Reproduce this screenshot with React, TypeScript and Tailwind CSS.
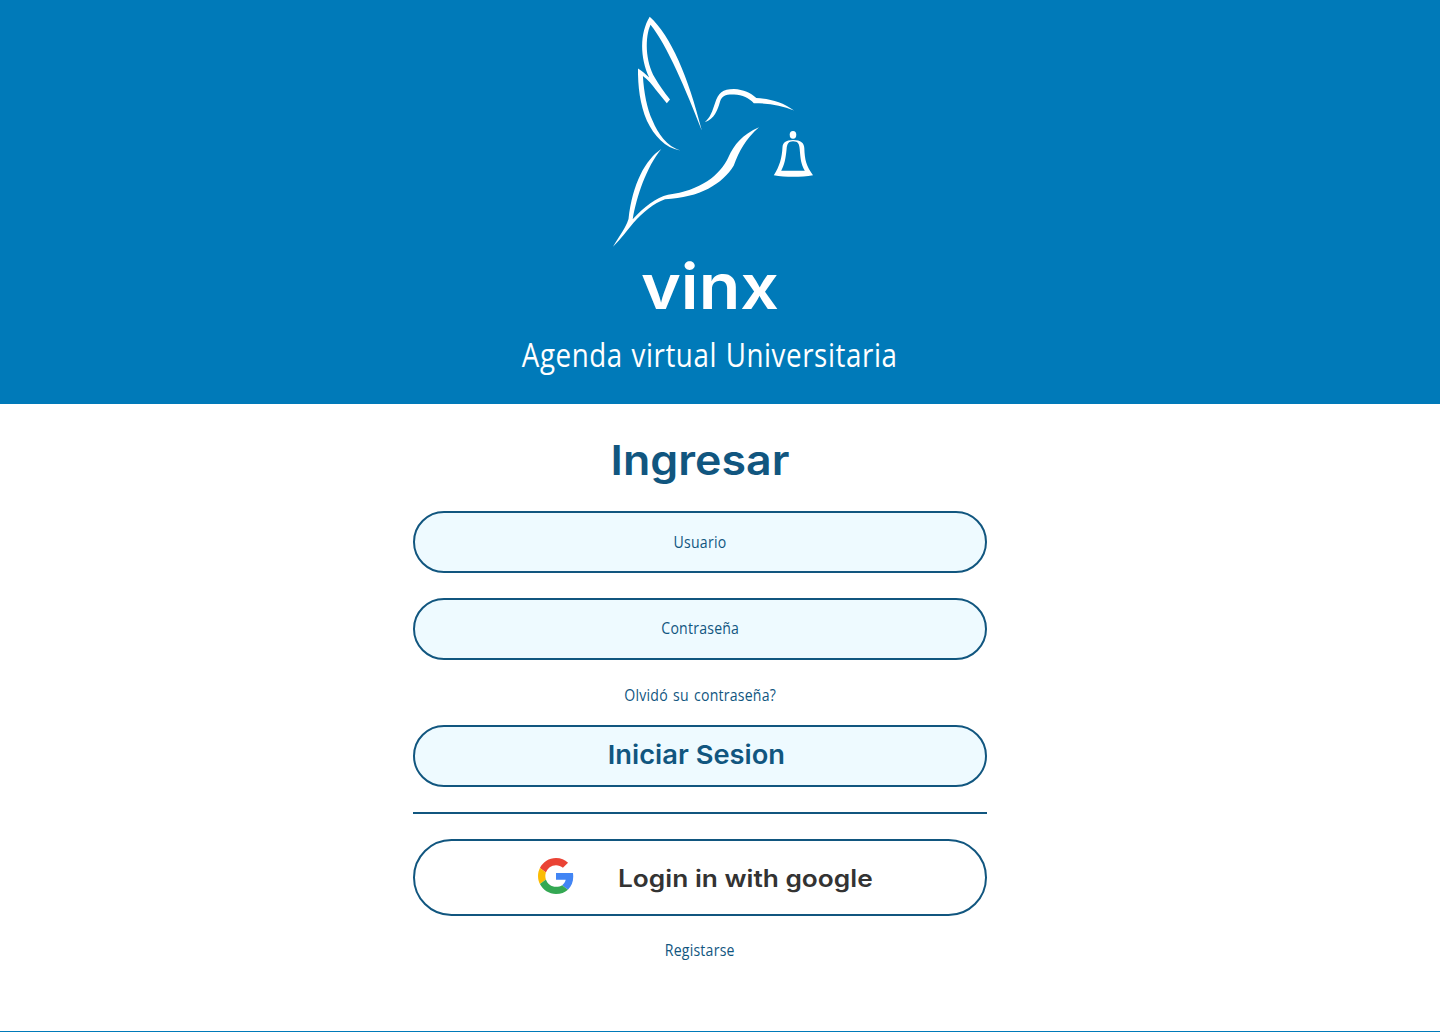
import React from "react";

function Hummingbird() {
  return (
    <svg
      className="block h-[232px] w-[202px]"
      viewBox="612 16 202 232"
      fill="#fff"
      fillRule="evenodd"
      aria-hidden="true"
    >
      <path d="M649.7 16.7C671 36 688 76 701.9 130.8C686 90 667 45 650.5 24.8C645 37 645 61 655 78C659 85 664 92 670 99.500L666.800 103.300L656 90C652 84.500 648 79.500 642.900 76C643.800 92 647 109 652.500 120.500C658 134 667 146.500 680.300 150.500C665 148 654 135.500 647 121C640 104.500 637.800 86 638 68.500C642 71 646 74.500 649.200 77.500C640 57.500 639.500 33.500 649.700 16.700Z" />
      <path d="M704.800 122.200C710.500 117.500 712.300 111 715 103.300C718.200 93 722.500 89 734 89C743.500 89.500 751 93 756.300 98C770.500 98.800 782.500 102 794 110.500C781.500 105.200 769 103.200 753.800 103.200C749 98 742.500 94.700 734 94.500C725.500 94.300 722 95.500 720 101.700C717.800 109.500 714.500 119 704.800 122.200Z" />
      <path d="M759 127.200C742.500 134.500 734 144.500 728.500 157C720 175.500 700.500 190.500 668 194.800C656.500 197.300 643.500 207.500 632.700 219.300C636.500 196.500 646.500 167 661.300 149C645.500 159.500 632.500 183.500 628.500 219C625.500 228.500 619.500 235.500 613 246.800C621 239 627 230.500 633.300 223C643 212.500 654 203 665 199.300C700 197.500 722.500 184 733.800 165.500C739 151 746 138.500 759 127.200Z" />
      <ellipse cx="793" cy="134.800" rx="3.300" ry="3.900" />
      <path d="M793 140C785.500 140 782.800 143 782.500 147C782 158 779.500 166.500 773.800 175.200C785.500 177.300 801 177.300 813 175.200C806.300 165.500 804.800 161 804.300 148C804.100 143 801 140 793 140ZM793 141.300C788.500 141.300 787 144 786.600 149C785.700 159 784.300 165 781.200 170.800H804.800C800.800 163.500 800.500 159 799.700 149C799.300 144 798 141.300 793 141.300Z" />
    </svg>
  );
}

function GoogleLogo() {
  return (
    <svg className="mb-1 block h-9 w-9" viewBox="0 0 48 48" aria-hidden="true">
      <path fill="#EA4335" d="M24 9.500c3.540 0 6.710 1.220 9.210 3.600l6.850-6.850C35.900 2.380 30.470 0 24 0 14.620 0 6.510 5.380 2.560 13.220l7.980 6.190C12.430 13.720 17.740 9.500 24 9.500z" />
      <path fill="#4285F4" d="M46.980 24.550c0-1.570-.15-3.090-.38-4.550H24v9.020h12.940c-.58 2.960-2.260 5.480-4.780 7.180l7.730 6c4.510-4.180 7.090-10.360 7.090-17.650z" />
      <path fill="#FBBC05" d="M10.530 28.590c-.48-1.450-.76-2.990-.76-4.590s.27-3.140.76-4.590l-7.980-6.190C.92 16.460 0 20.120 0 24c0 3.880.92 7.540 2.560 10.780l7.970-6.190z" />
      <path fill="#34A853" d="M24 48c6.480 0 11.930-2.130 15.890-5.810l-7.730-6c-2.150 1.450-4.920 2.300-8.160 2.300-6.260 0-11.570-4.220-13.470-9.910l-7.980 6.190C6.510 42.620 14.620 48 24 48z" />
    </svg>
  );
}

const body = "font-['Open_Sans','Noto_Sans',sans-serif] whitespace-nowrap";
const small = "scale-x-[0.880] text-[16px] leading-6 tracking-[0.25px] [word-spacing:1.5px]";
const heading = "font-['Inter',sans-serif] font-semibold whitespace-nowrap";

export default function App() {
  return (
    <div className="flex h-[1032px] w-full flex-col overflow-hidden border-b border-[#007ab9] bg-white">
      <header className="flex h-[404px] shrink-0 flex-col items-center bg-[#007ab9] pt-4 pr-5 text-white">
        <div className="pl-[6px]">
          <Hummingbird />
        </div>
        <h1 className={`${heading} mt-[-2px] h-20 scale-x-[1.080] text-[63px] leading-[80px]`}>vinx</h1>
        <p className={`${body} mt-[7px] h-11 scale-x-[0.840] text-[33px] leading-[44px] tracking-[0.7px] [word-spacing:1px]`}>
          Agenda virtual Universitaria
        </p>
      </header>
      <main className="flex flex-col items-center pr-10 text-[#11567f]">
        <h2 className={`${heading} mt-[31px] h-[50px] scale-x-[1.090] text-[41px] leading-[50px]`}>Ingresar</h2>
        <form className="flex w-[574px] flex-col items-center">
          <label className="mt-[26px] flex h-[62px] w-full items-center justify-center rounded-full border-2 border-[#11567f] bg-[#eefaff]">
            <span className={`${body} ${small}`}>Usuario</span>
          </label>
          <label className="mt-[25px] flex h-[62px] w-full items-center justify-center rounded-full border-2 border-[#11567f] bg-[#eefaff] pb-0.5">
            <span className={`${body} ${small}`}>Contraseña</span>
          </label>
          <a className={`${body} ${small} mt-[23px] h-6`}>Olvidó su contraseña?</a>
          <button
            type="button"
            className="mt-[18px] flex h-[62px] w-full items-center justify-center rounded-full border-2 border-[#11567f] bg-[#eefaff] pr-2 pb-0.5"
          >
            <span className={`${heading} scale-x-[1.050] text-[26px] leading-8`}>Iniciar Sesion</span>
          </button>
          <div className="mt-[25px] h-0.5 w-full bg-[#11567f]" />
          <button
            type="button"
            className="mt-[25px] flex h-[77px] w-full items-center rounded-full border-2 border-[#11567f] bg-white pl-[123px] text-[#333]"
          >
            <GoogleLogo />
            <span className={`${heading} mt-0.5 ml-11 origin-left scale-x-[1.095] text-[24px] leading-8`}>
              Login in with google
            </span>
          </button>
          <a className={`${body} ${small} mt-[22px] h-6`}>Registarse</a>
        </form>
      </main>
    </div>
  );
}
